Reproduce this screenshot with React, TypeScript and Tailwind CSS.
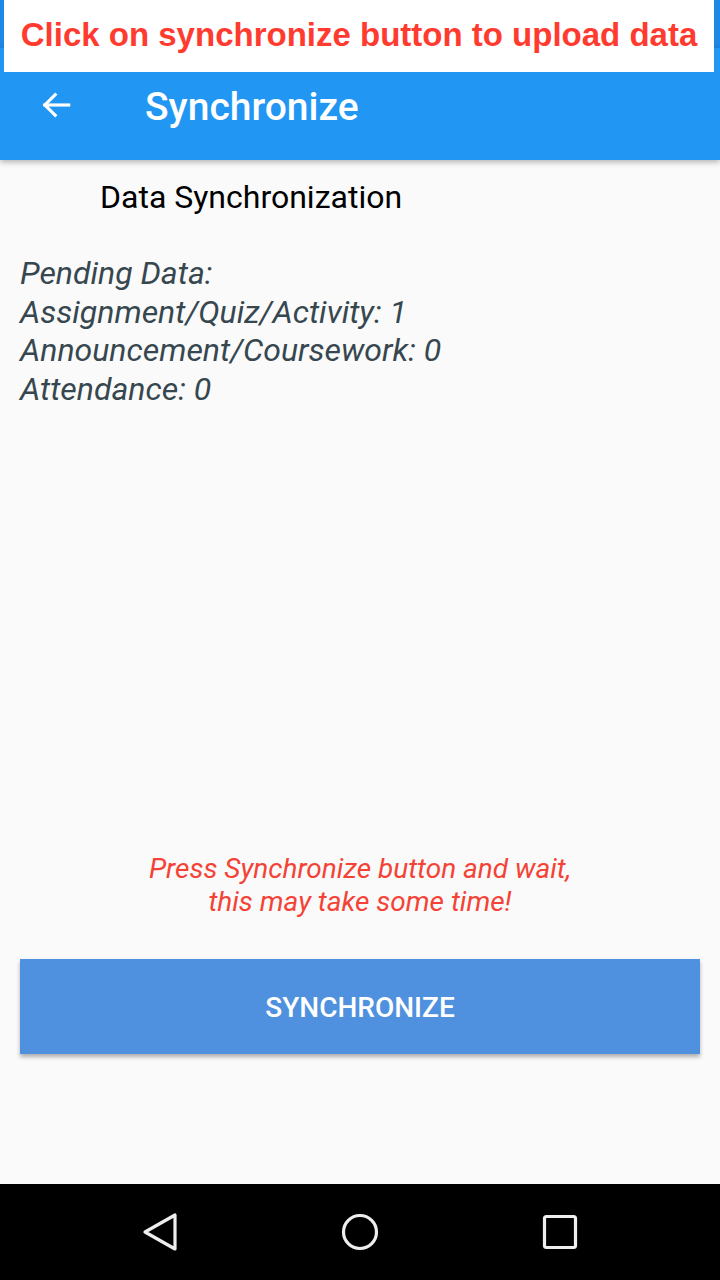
import React from "react";

export default function App() {
  return (
    <div className="relative w-[720px] h-[1280px] bg-[#fafafa] flex flex-col overflow-hidden" style={{ fontFamily: "Roboto, 'Noto Sans', sans-serif" }}>
      <div className="h-[48px] bg-[#1e88e5] shrink-0" />
      <div className="h-[112px] bg-[#2196f3] shrink-0 flex items-center shadow-[0_2px_6px_rgba(0,0,0,0.3)] relative z-10">
        <div className="w-[112px] flex justify-center mt-[2px]">
          <svg width="38" height="38" viewBox="0 0 24 24" fill="none" stroke="white" strokeWidth="2" strokeLinecap="square">
            <path d="M20 12H5" />
            <path d="M11.5 5.5L5 12l6.5 6.5" />
          </svg>
        </div>
        <div className="text-white text-[39px] font-medium ml-[33px] mt-[7px] tracking-[0px]">Synchronize</div>
      </div>
      <div className="flex-1 flex flex-col">
        <div className="text-[32px] text-black pl-[100px] mt-[17px] leading-[40px]">Data Synchronization</div>
        <div className="mt-[37px] pl-[20px] italic text-[32px] leading-[38.5px] text-[#37474f]">
          <div>Pending Data:</div>
          <div>Assignment/Quiz/Activity: 1</div>
          <div>Announcement/Coursework: 0</div>
          <div>Attendance: 0</div>
        </div>
        <div className="flex-1" />
        <div className="text-center italic text-[28px] leading-[33px] text-[#f44336]">
          <div>Press Synchronize button and wait,</div>
          <div>this may take some time!</div>
        </div>
        <div className="px-[20px] mt-[41px] mb-[130px]">
          <div className="h-[95px] bg-[#4f91de] flex items-center justify-center text-white text-[28px] font-medium shadow-[0_3px_4px_rgba(0,0,0,0.3)] pt-[3px]">
            SYNCHRONIZE
          </div>
        </div>
      </div>
      <div className="h-[96px] bg-black shrink-0 flex items-center justify-center gap-[160px]">
        <svg width="40" height="40" viewBox="0 0 40 40">
          <path d="M35 3 L35 37 L5 20 Z" fill="none" stroke="#eee" strokeWidth="3.2" strokeLinejoin="round" />
        </svg>
        <svg width="40" height="40" viewBox="0 0 40 40">
          <circle cx="20" cy="20" r="16.5" fill="none" stroke="#eee" strokeWidth="3.2" />
        </svg>
        <svg width="40" height="40" viewBox="0 0 40 40">
          <rect x="4.5" y="4.5" width="31" height="31" rx="2" fill="none" stroke="#eee" strokeWidth="3.2" />
        </svg>
      </div>
      <div className="absolute left-[4px] top-0 w-[710px] h-[72px] bg-white z-20 flex items-center justify-center">
        <div className="text-[#ff3b30] font-bold text-[33px] tracking-[0px] -mt-[2px] whitespace-nowrap" style={{ fontFamily: "'Liberation Sans', Arial, sans-serif" }}>
          Click on synchronize button to upload data
        </div>
      </div>
    </div>
  );
}
